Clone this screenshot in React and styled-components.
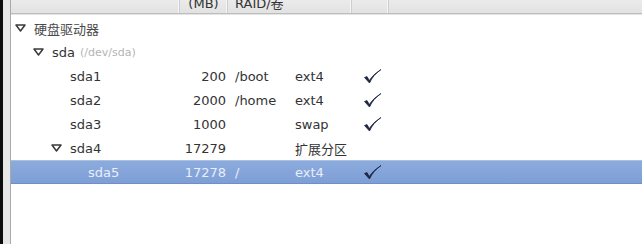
import React from "react";
import styled, { createGlobalStyle } from "styled-components";

const Global = createGlobalStyle`
  html, body { margin: 0; padding: 0; background: #fff; }
  body { width: 642px; height: 244px; overflow: hidden; }
`;

const FONT = `"DejaVu Sans", "Noto Sans CJK SC", sans-serif`;

const Screen = styled.div`
  display: flex;
  width: 642px;
  height: 244px;
  font-family: ${FONT};
  font-size: 13px;
  color: #333;
`;

const Edge = styled.div`
  width: 3px;
  background: #0c0c0c;
  flex: none;
`;

const Frame = styled.div`
  width: 7px;
  background: #e6e6e6;
  border-right: 1px solid #a9a9a9;
  flex: none;
`;

const Panel = styled.div`
  flex: 1;
  display: flex;
  flex-direction: column;
  background: #fff;
  min-width: 0;
`;

const HEAD_COLS = "169px 48px 124px 37px 1fr";
const BODY_COLS = "169px 48px 60px 64px 37px 1fr";

const Header = styled.div`
  display: grid;
  grid-template-columns: ${HEAD_COLS};
  height: 13px;
  background: linear-gradient(#ebebeb, #e2e2e2);
  border-bottom: 1px solid #bdbdbd;
  box-shadow: 0 1px 0 #e4e4e4;
  overflow: hidden;
  flex: none;
`;

const HeadCell = styled.div`
  border-right: 1px solid #cdcdcd;
  box-shadow: inset -1px 0 0 #f6f6f6;
  line-height: 13px;
  overflow: hidden;
  color: #333;
  text-align: ${(p) => p.$align || "left"};
  padding-left: ${(p) => p.$pad || 0}px;
  &:last-child { border-right: none; box-shadow: none; }
`;

const HeadLabel = styled.span`
  display: block;
  margin-top: -3px;
  white-space: nowrap;
`;

const Tree = styled.div`
  padding-top: 2px;
  display: flex;
  flex-direction: column;
`;

const Row = styled.div`
  display: grid;
  grid-template-columns: ${BODY_COLS};
  height: 24px;
  align-items: center;
  box-sizing: border-box;
  ${(p) =>
    p.$selected &&
    `
    background: linear-gradient(#8cabdd, #7e9fd6);
    border-top: 1px solid #a9bfe3;
    border-bottom: 1px solid #6f8fc6;
    color: #e9eef8;
  `}
`;

const NameCell = styled.div`
  display: flex;
  align-items: center;
  padding-left: ${(p) => 4 + p.$level * 18}px;
  white-space: nowrap;
`;

const Expander = styled.span`
  width: 19px;
  flex: none;
  display: flex;
  align-items: center;
`;

const Name = styled.span`
  color: ${(p) => (p.$muted ? "#4a4a4a" : "inherit")};
`;

const DevPath = styled.span`
  font-size: 11px;
  color: #b4b4b4;
  margin-left: 5px;
`;

const SizeCell = styled.div`
  text-align: right;
  padding-right: 2px;
`;

const TextCell = styled.div`
  padding-left: 7px;
  white-space: nowrap;
`;

const CheckCell = styled.div`
  display: flex;
  align-items: center;
  padding-left: 11px;
`;

const Triangle = () => (
  <svg width="11" height="8" viewBox="0 0 11 8">
    <polygon points="1,1 10,1 5.5,7" fill="#fff" stroke="#3a3a3a" strokeWidth="1.5" strokeLinejoin="round" />
  </svg>
);

const Check = () => (
  <svg width="19" height="17" viewBox="0 0 19 17">
    <path d="M1.5 9.5 L6.5 15 Q10 7 18 1.5 Q10 6.5 6.3 12.5 L4 8.6 Z" fill="#1c2640" stroke="#1c2640" strokeWidth="0.8" strokeLinejoin="round" />
  </svg>
);

const rows = [
  { level: 0, name: "硬盘驱动器", expand: true, muted: true },
  { level: 1, name: "sda", path: "(/dev/sda)", expand: true },
  { level: 2, name: "sda1", size: "200", mount: "/boot", type: "ext4", check: true },
  { level: 2, name: "sda2", size: "2000", mount: "/home", type: "ext4", check: true },
  { level: 2, name: "sda3", size: "1000", mount: "", type: "swap", check: true },
  { level: 2, name: "sda4", size: "17279", mount: "", type: "扩展分区", expand: true },
  { level: 3, name: "sda5", size: "17278", mount: "/", type: "ext4", check: true, selected: true },
];

export default function App() {
  return (
    <>
      <Global />
      <Screen>
        <Edge />
        <Frame />
        <Panel>
          <Header>
            <HeadCell />
            <HeadCell $align="center"><HeadLabel>(MB)</HeadLabel></HeadCell>
            <HeadCell $pad={7}><HeadLabel>RAID/卷</HeadLabel></HeadCell>
            <HeadCell />
            <HeadCell />
          </Header>
          <Tree>
            {rows.map((r, i) => (
              <Row key={i} $selected={r.selected}>
                <NameCell $level={r.level}>
                  <Expander>{r.expand && <Triangle />}</Expander>
                  <Name $muted={r.muted}>{r.name}</Name>
                  {r.path && <DevPath>{r.path}</DevPath>}
                </NameCell>
                <SizeCell>{r.size}</SizeCell>
                <TextCell>{r.mount}</TextCell>
                <TextCell>{r.type}</TextCell>
                <CheckCell>{r.check && <Check />}</CheckCell>
                <div />
              </Row>
            ))}
          </Tree>
        </Panel>
      </Screen>
    </>
  );
}
